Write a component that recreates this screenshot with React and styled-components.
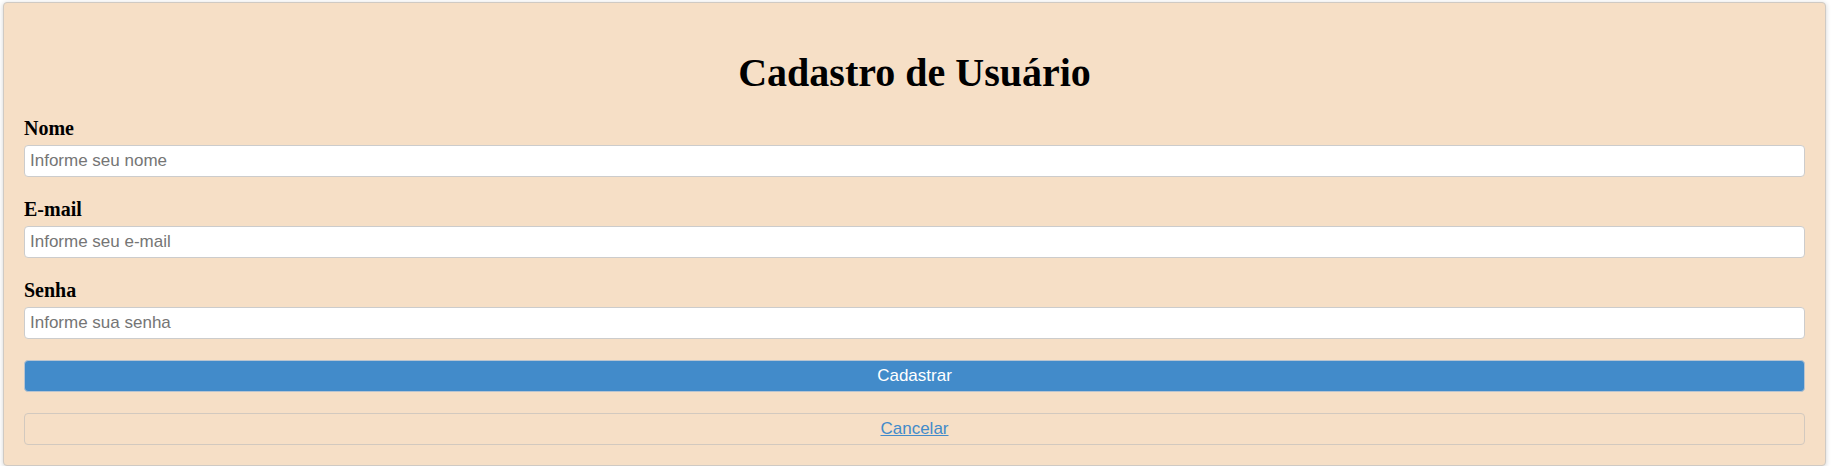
import React from "react";
import styled, { createGlobalStyle } from "styled-components";

const GlobalStyle = createGlobalStyle`
  html, body { margin: 0; padding: 0; background: #ffffff; }
  body { font-family: "Liberation Serif", "Times New Roman", serif; }
  * { box-sizing: border-box; }
`;

const Card = styled.form`
  margin: 2px 9px 0 3px;
  padding: 20px;
  background: #f6dfc6;
  border: 1px solid #cfcac4;
  border-radius: 4px;
  box-shadow: 0 1px 5px rgba(0, 0, 0, 0.18);
  display: flex;
  flex-direction: column;
`;

const Title = styled.h1`
  margin: 27px 0 21px;
  font-family: "Liberation Serif", "Times New Roman", serif;
  font-size: 40px;
  line-height: 46px;
  font-weight: bold;
  text-align: center;
  color: #000;
`;

const Group = styled.div`
  display: flex;
  flex-direction: column;
  margin-bottom: 21px;
`;

const Label = styled.label`
  font-family: "Liberation Serif", "Times New Roman", serif;
  font-size: 20px;
  line-height: 23px;
  font-weight: bold;
  color: #000;
  margin-bottom: 5px;
`;

const Input = styled.input`
  height: 32px;
  width: 100%;
  padding: 0 5px;
  font-family: "Liberation Sans", Arial, sans-serif;
  font-size: 17px;
  color: #333;
  background: #fff;
  border: 1px solid #cccccc;
  border-radius: 4px;
  outline: none;
  &::placeholder { color: #757575; }
`;

const Button = styled.button`
  height: 32px;
  width: 100%;
  padding: 0;
  font-family: "Liberation Sans", Arial, sans-serif;
  font-size: 17px;
  border-radius: 4px;
  cursor: pointer;
  color: ${(p) => (p.$variant === "link" ? "#428bca" : "#ffffff")};
  background: ${(p) => (p.$variant === "link" ? "transparent" : "#428bca")};
  border: 1px solid ${(p) => (p.$variant === "link" ? "#d2c9bf" : "#b8c4d0")};
  text-decoration: ${(p) => (p.$variant === "link" ? "underline" : "none")};
  margin-bottom: ${(p) => (p.$last ? "0" : "21px")};
`;

const fields = [
  { id: "nome", label: "Nome", type: "text", placeholder: "Informe seu nome" },
  { id: "email", label: "E-mail", type: "email", placeholder: "Informe seu e-mail" },
  { id: "senha", label: "Senha", type: "password", placeholder: "Informe sua senha" },
];

export default function App() {
  return (
    <>
      <GlobalStyle />
      <Card onSubmit={(e) => e.preventDefault()}>
        <Title>Cadastro de Usuário</Title>
        {fields.map((f) => (
          <Group key={f.id}>
            <Label htmlFor={f.id}>{f.label}</Label>
            <Input id={f.id} type={f.type} placeholder={f.placeholder} />
          </Group>
        ))}
        <Button type="submit">Cadastrar</Button>
        <Button type="button" $variant="link" $last>
          Cancelar
        </Button>
      </Card>
    </>
  );
}
